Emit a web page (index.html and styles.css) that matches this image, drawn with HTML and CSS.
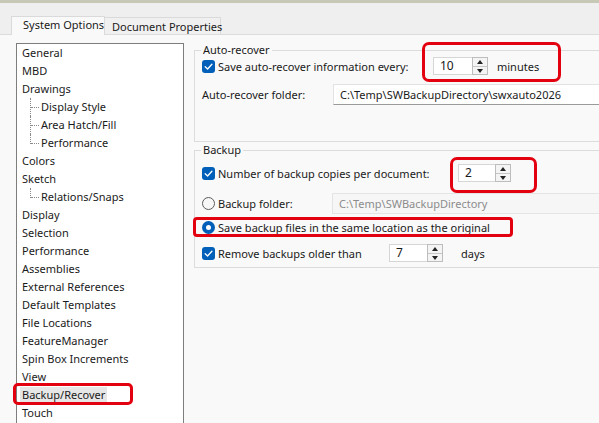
FILE: index.html
```html
<!DOCTYPE html>
<html lang="en">
<head>
<meta charset="utf-8">
<title>System Options - Backup/Recover</title>
<link rel="stylesheet" href="styles.css">
</head>
<body>
<div class="window">
  <div class="titlebar"></div>

  <div class="tabs">
    <div class="tab active">System Options</div>
    <div class="tab">Document Properties</div>
  </div>

  <div class="panel">
    <ul class="tree">
      <li>General</li>
      <li>MBD</li>
      <li>Drawings</li>
      <li class="child">Display Style</li>
      <li class="child">Area Hatch/Fill</li>
      <li class="child last">Performance</li>
      <li>Colors</li>
      <li>Sketch</li>
      <li class="child last">Relations/Snaps</li>
      <li>Display</li>
      <li>Selection</li>
      <li>Performance</li>
      <li>Assemblies</li>
      <li>External References</li>
      <li>Default Templates</li>
      <li>File Locations</li>
      <li>FeatureManager</li>
      <li>Spin Box Increments</li>
      <li>View</li>
      <li class="selected"><span>Backup/Recover</span></li>
      <li>Touch</li>
    </ul>

    <div class="options">
      <fieldset class="group group-auto">
        <legend>Auto-recover</legend>
        <div class="row row-first">
          <span class="check"><svg viewBox="0 0 13 13" width="13" height="13"><path d="M3.2 6.7 L5.6 9 L9.9 4.2" fill="none" stroke="#fff" stroke-width="1.3" stroke-linecap="round" stroke-linejoin="round"/></svg></span>
          <span class="label label-every">Save auto-recover information every:</span>
          <span class="spin spin-10"><span class="spin-value">10</span><span class="spin-btns"><span class="up"></span><span class="down"></span></span></span>
          <span class="unit unit-min">minutes</span>
        </div>
        <div class="row row-folder">
          <span class="label label-folder">Auto-recover folder:</span>
          <span class="field">C:\Temp\SWBackupDirectory\swxauto2026</span>
        </div>
      </fieldset>

      <fieldset class="group group-backup">
        <legend>Backup</legend>
        <div class="row row-first">
          <span class="check"><svg viewBox="0 0 13 13" width="13" height="13"><path d="M3.2 6.7 L5.6 9 L9.9 4.2" fill="none" stroke="#fff" stroke-width="1.3" stroke-linecap="round" stroke-linejoin="round"/></svg></span>
          <span class="label label-copies">Number of backup copies per document:</span>
          <span class="spin spin-2"><span class="spin-value">2</span><span class="spin-btns"><span class="up"></span><span class="down"></span></span></span>
        </div>
        <div class="row row-radio">
          <span class="radio"></span>
          <span class="label label-bfolder">Backup folder:</span>
          <span class="field disabled">C:\Temp\SWBackupDirectory</span>
        </div>
        <div class="row row-same">
          <span class="radio on"></span>
          <span class="label">Save backup files in the same location as the original</span>
        </div>
        <div class="row row-remove">
          <span class="check"><svg viewBox="0 0 13 13" width="13" height="13"><path d="M3.2 6.7 L5.6 9 L9.9 4.2" fill="none" stroke="#fff" stroke-width="1.3" stroke-linecap="round" stroke-linejoin="round"/></svg></span>
          <span class="label label-older">Remove backups older than</span>
          <span class="spin spin-7"><span class="spin-value">7</span><span class="spin-btns"><span class="up"></span><span class="down"></span></span></span>
          <span class="unit unit-days">days</span>
        </div>
      </fieldset>
    </div>
  </div>

  <!-- red callouts drawn over the dialog -->
  <div class="callout callout-minutes"></div>
  <div class="callout callout-copies"></div>
  <div class="callout callout-same"></div>
  <div class="callout callout-nav"></div>
</div>
</body>
</html>
```

FILE: styles.css
```css
* { box-sizing: border-box; }

html, body {
  margin: 0;
  padding: 0;
  width: 599px;
  height: 423px;
  overflow: hidden;
}

body {
  background: #efefef;
  font-family: "Noto Sans", "Open Sans", sans-serif;
  font-size: 11px;
  color: #1a1a1a;
}

.window {
  position: relative;
  width: 599px;
  height: 423px;
  overflow: hidden;
}

.titlebar {
  height: 3px;
  background: #c8c8b6;
}

/* tab strip */
.tabs {
  display: flex;
  align-items: flex-end;
  height: 31px;
  padding-left: 11px;
}

.tab {
  height: 17px;
  width: 116px;
  padding-left: 7px;
  line-height: 17px;
  background: #f0f0f0;
  border: 1px solid #dadada;
  border-bottom: none;
  border-left: none;
  white-space: nowrap;
}

.tab.active {
  height: 19px;
  width: 94px;
  padding-left: 11px;
  line-height: 16px;
  background: #f9f9f9;
  border-left: 1px solid #dadada;
  position: relative;
  top: 1px;
}

.panel {
  display: flex;
  align-items: flex-start;
  height: 389px;
  background: #f9f9f9;
  border-top: 1px solid #dcdcdc;
}

/* navigation tree */
.tree {
  list-style: none;
  margin: 8px 0 0 16px;
  padding: 0;
  width: 168px;
  height: 400px;
  background: #fff;
  border: 1px solid #7e7e7e;
  flex-shrink: 0;
}

.tree li {
  position: relative;
  height: 18px;
  line-height: 18px;
  padding-left: 5px;
  white-space: nowrap;
}

.tree li.child {
  padding-left: 24px;
}

.tree li.child::before {
  content: "";
  position: absolute;
  left: 13px;
  top: 0;
  height: 18px;
  border-left: 1px dotted #8a8a8a;
}

.tree li.child::after {
  content: "";
  position: absolute;
  left: 14px;
  top: 9px;
  width: 8px;
  border-top: 1px dotted #8a8a8a;
}

.tree li.child.last::before {
  height: 10px;
}

.tree li.selected {
  padding-left: 3px;
}

.tree li.selected span {
  display: inline-block;
  height: 16px;
  line-height: 16px;
  padding: 0 2px;
  background: #e6e6e6;
}

/* option groups */
.options {
  margin: 7px 0 0 10px;
  width: 440px;
  flex-shrink: 0;
}

.group {
  margin: 0;
  padding: 0 6px;
  border: 1px solid #dcdcdc;
  min-width: 0;
}

.group legend {
  padding: 0 2px;
  height: 16px;
  line-height: 16px;
}

.group-auto {
  height: 100px;
}

.group-backup {
  margin-top: 0;
  height: 126px;
}

.row {
  display: flex;
  align-items: center;
  height: 16px;
  white-space: nowrap;
}

.group-auto .row-first { margin-top: 0; }
.group-backup .row-first { margin-top: 7px; }

.row-folder {
  margin-top: 10px;
  height: 21px;
}

.row-radio {
  margin-top: 12px;
  height: 20px;
}

.row-same {
  margin-top: 6px;
}

.row-remove {
  margin-top: 10px;
}

.check {
  width: 13px;
  height: 13px;
  margin-left: 1px;
  margin-right: 3px;
  border-radius: 3px;
  background: #005fb8;
  display: inline-flex;
  flex-shrink: 0;
}

.check svg { display: block; }

.radio {
  width: 13px;
  height: 13px;
  margin-left: 1px;
  margin-right: 3px;
  border-radius: 50%;
  border: 1px solid #5c5c5c;
  background: #f7f7f7;
  flex-shrink: 0;
  position: relative;
}

.radio.on {
  border: none;
  background: #005fb8;
}

.radio.on::after {
  content: "";
  position: absolute;
  left: 4px;
  top: 4px;
  width: 5px;
  height: 5px;
  border-radius: 50%;
  background: #fff;
}

.label { flex-shrink: 0; }

.label-every { width: 215px; }
.label-copies { width: 240px; }
.label-older { width: 171px; }
.label-folder { width: 131px; margin-left: 1px; }
.label-bfolder { width: 114px; }

/* spin boxes */
.spin {
  display: inline-flex;
  height: 18px;
  flex-shrink: 0;
}

.spin-value {
  background: #fff;
  border: 1px solid #d6d6d6;
  border-right: none;
  padding-left: 6px;
  line-height: 16px;
  font-size: 12px;
}

.spin-10 .spin-value { width: 39px; }
.spin-2 .spin-value { width: 37px; }
.spin-7 .spin-value { width: 38px; }

.spin-btns {
  width: 16px;
  display: flex;
  flex-direction: column;
  border: 1px solid #bdbdbd;
  background: #f4f4f4;
}

.spin-btns span {
  flex: 1;
  position: relative;
}

.spin-btns .up {
  border-bottom: 1px solid #c6c6c6;
}

.spin-btns .up::after,
.spin-btns .down::after {
  content: "";
  position: absolute;
  left: 4px;
  width: 0;
  height: 0;
  border-left: 3.5px solid transparent;
  border-right: 3.5px solid transparent;
}

.spin-btns .up::after {
  top: 2px;
  border-bottom: 4px solid #222;
}

.spin-btns .down::after {
  top: 2px;
  border-top: 4px solid #222;
}

.unit-min { margin-left: 9px; }
.unit-days { margin-left: 18px; }

/* text fields */
.field {
  flex: 1;
  height: 21px;
  line-height: 19px;
  padding-left: 6px;
  background: #fff;
  border: 1px solid #e2e2e2;
  border-bottom-color: #9a9a9a;
}

.field.disabled {
  background: #f6f6f6;
  border-color: #e4e4e4;
  color: #8c8c8c;
}

/* red annotation callouts */
.callout {
  position: absolute;
  border: 3px solid #e3000f;
  border-radius: 7px;
}

.callout-minutes { left: 422px; top: 42px; width: 139px; height: 40px; }
.callout-copies { left: 450px; top: 157px; width: 87px; height: 36px; }
.callout-same { left: 193px; top: 217px; width: 320px; height: 20px; border-radius: 4px; }
.callout-nav { left: 13px; top: 383px; width: 120px; height: 22px; border-radius: 5px; }
```
